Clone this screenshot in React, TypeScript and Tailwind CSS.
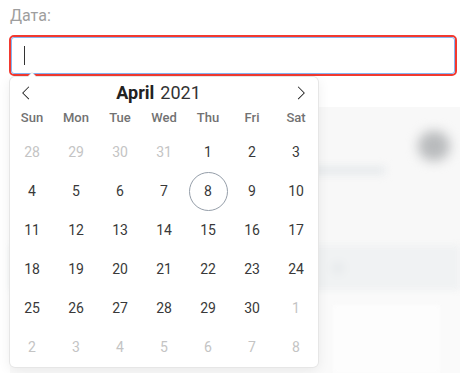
import React from "react";

type Day = { n: number; muted?: boolean; today?: boolean };

const rows: Day[][] = [
  [{ n: 28, muted: true }, { n: 29, muted: true }, { n: 30, muted: true }, { n: 31, muted: true }, { n: 1 }, { n: 2 }, { n: 3 }],
  [{ n: 4 }, { n: 5 }, { n: 6 }, { n: 7 }, { n: 8, today: true }, { n: 9 }, { n: 10 }],
  [{ n: 11 }, { n: 12 }, { n: 13 }, { n: 14 }, { n: 15 }, { n: 16 }, { n: 17 }],
  [{ n: 18 }, { n: 19 }, { n: 20 }, { n: 21 }, { n: 22 }, { n: 23 }, { n: 24 }],
  [{ n: 25 }, { n: 26 }, { n: 27 }, { n: 28 }, { n: 29 }, { n: 30 }, { n: 1, muted: true }],
  [{ n: 2, muted: true }, { n: 3, muted: true }, { n: 4, muted: true }, { n: 5, muted: true }, { n: 6, muted: true }, { n: 7, muted: true }, { n: 8, muted: true }],
];

const weekdays = ["Sun", "Mon", "Tue", "Wed", "Thu", "Fri", "Sat"];

function Prev() {
  return (
    <svg width="14" height="14" viewBox="0 0 17 17" fill="#1a1a1a">
      <path d="M5.207 8.471l7.146 7.147-0.707 0.707-7.853-7.854 7.854-7.853 0.707 0.707-7.147 7.146z" />
    </svg>
  );
}

function Next() {
  return (
    <svg width="14" height="14" viewBox="0 0 17 17" fill="#1a1a1a">
      <path d="M13.207 8.472l-7.854 7.854-0.707-0.707 7.146-7.146-7.146-7.148 0.707-0.707 7.854 7.854z" />
    </svg>
  );
}

export default function App() {
  return (
    <div className="relative w-[460px] h-[373px] overflow-hidden bg-white font-['Roboto',sans-serif]">
      <div className="pt-[4px] pl-[10px] text-[16px] leading-6 text-[#9e9e9e]">Дата:</div>
      <div className="mt-[7px] ml-[9px] w-[448px] h-[41px] rounded-[5px] border-2 border-[#f2392f]">
        <div className="h-full rounded-[3px] border border-[#84b4f2] flex items-center pl-[12px]">
          <div className="w-px h-[19px] bg-[#333]" />
        </div>
      </div>

      {/* blurred page content behind the popup */}
      <div className="mt-[31px] ml-[10px] h-[266px] flex flex-col bg-[#f8f8f8]">
        <div className="h-[93px] flex items-start">
          <div className="mt-[60px] ml-[270px] w-[105px] h-[7px] bg-[#e3e7ea] blur-[4px]" />
          <div className="mt-[24px] ml-[33px] w-[32px] h-[30px] rounded-full bg-[#b9bbbd] blur-[6px]" />
        </div>
        <div className="h-[45px]" />
        <div className="h-[45px] bg-[#f0f2f3] blur-[3px] flex items-center">
          <div className="ml-[323px] w-[10px] h-[10px] rounded-full bg-[#e3e6e9] blur-[3px]" />
        </div>
        <div className="flex-1 bg-[#fafafa] pt-[15px] pl-[323px]">
          <div className="w-[107px] h-full bg-[#fdfdfd] blur-[2px]" />
        </div>
      </div>

      {/* calendar popup */}
      <div className="absolute left-[10px] top-[77px] w-[308px] h-[290px] rounded-[5px] bg-white shadow-[1px_0_0_#e6e6e6,-1px_0_0_#e6e6e6,0_1px_0_#e6e6e6,0_-1px_0_#e6e6e6,0_3px_13px_rgba(0,0,0,0.08)]">
        <div className="absolute left-[17px] -top-[5px] w-0 h-0 border-x-[5px] border-x-transparent border-b-[5px] border-b-[#e6e6e6]" />
        <div className="absolute left-[18px] -top-[4px] w-0 h-0 border-x-[4px] border-x-transparent border-b-[4px] border-b-white" />
        <div className="h-[32px] flex items-center">
          <div className="pl-[9px] flex items-center">
            <Prev />
          </div>
          <div className="flex-1 flex justify-center items-baseline pr-[10px] text-[18px] leading-none text-[#222]">
            <span className="font-bold">April</span>
            <span className="ml-[6px] font-normal text-[#333]">2021</span>
          </div>
          <div className="pr-[10px] flex items-center">
            <Next />
          </div>
        </div>
        <div className="grid grid-cols-7 h-[24px]">
          {weekdays.map((w) => (
            <div key={w} className="text-center text-[13px] leading-[18px] font-medium text-[#727272]">
              {w}
            </div>
          ))}
        </div>
        <div className="grid grid-cols-7">
          {rows.flat().map((d, i) => (
            <div key={i} className="flex justify-center">
              <div
                className={
                  "w-[39px] h-[39px] flex items-center justify-center rounded-full text-[14px] " +
                  (d.muted ? "text-[#c4c4c4] " : "text-[#393939] ") +
                  (d.today ? "border border-[#959ea9]" : "")
                }
              >
                {d.n}
              </div>
            </div>
          ))}
        </div>
      </div>
    </div>
  );
}
